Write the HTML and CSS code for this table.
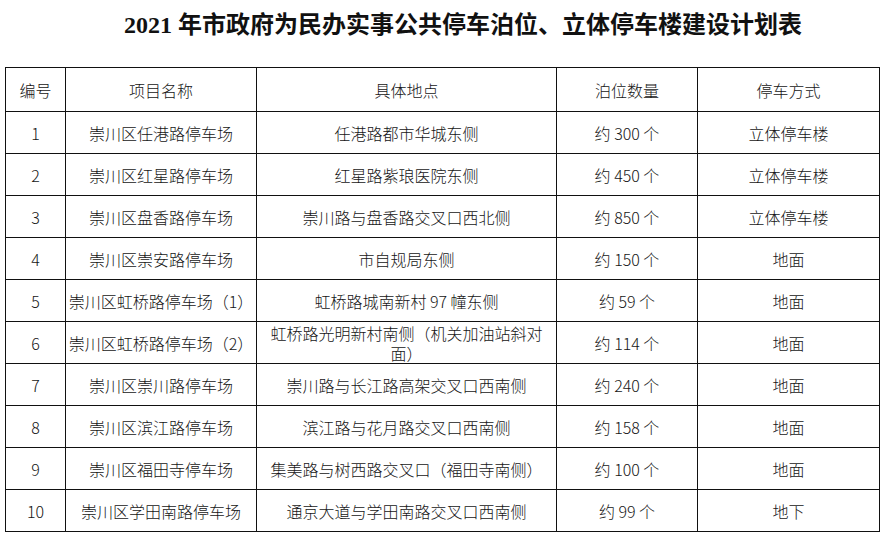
FILE: index.html
```html
<!DOCTYPE html>
<html lang="zh-CN">
<head>
<meta charset="utf-8">
<title>2021年市政府为民办实事公共停车泊位、立体停车楼建设计划表</title>
<link rel="stylesheet" href="styles.css">
</head>
<body>
<div class="page">
  <h1 class="title"><span class="num">2021</span> 年市政府为民办实事公共停车泊位、立体停车楼建设计划表</h1>
  <table class="plan">
    <colgroup>
      <col class="c-no">
      <col class="c-name">
      <col class="c-addr">
      <col class="c-qty">
      <col class="c-type">
    </colgroup>
    <thead>
      <tr class="head"><th>编号</th><th class="name">项目名称</th><th>具体地点</th><th>泊位数量</th><th>停车方式</th></tr>
    </thead>
    <tbody>
      <tr><td>1</td><td class="name">崇川区任港路停车场</td><td>任港路都市华城东侧</td><td>约 300 个</td><td>立体停车楼</td></tr>
      <tr><td>2</td><td class="name">崇川区红星路停车场</td><td>红星路紫琅医院东侧</td><td>约 450 个</td><td>立体停车楼</td></tr>
      <tr><td>3</td><td class="name">崇川区盘香路停车场</td><td>崇川路与盘香路交叉口西北侧</td><td>约 850 个</td><td>立体停车楼</td></tr>
      <tr><td>4</td><td class="name">崇川区崇安路停车场</td><td>市自规局东侧</td><td>约 150 个</td><td>地面</td></tr>
      <tr><td>5</td><td class="name">崇川区虹桥路停车场（1）</td><td>虹桥路城南新村 97 幢东侧</td><td>约 59 个</td><td>地面</td></tr>
      <tr><td>6</td><td class="name">崇川区虹桥路停车场（2）</td><td class="wrap">虹桥路光明新村南侧（机关加油站斜对面）</td><td>约 114 个</td><td>地面</td></tr>
      <tr><td>7</td><td class="name">崇川区崇川路停车场</td><td>崇川路与长江路高架交叉口西南侧</td><td>约 240 个</td><td>地面</td></tr>
      <tr><td>8</td><td class="name">崇川区滨江路停车场</td><td>滨江路与花月路交叉口西南侧</td><td>约 158 个</td><td>地面</td></tr>
      <tr><td>9</td><td class="name">崇川区福田寺停车场</td><td>集美路与树西路交叉口（福田寺南侧）</td><td>约 100 个</td><td>地面</td></tr>
      <tr><td>10</td><td class="name">崇川区学田南路停车场</td><td>通京大道与学田南路交叉口西南侧</td><td>约 99 个</td><td>地下</td></tr>
    </tbody>
  </table>
</div>
</body>
</html>
```

FILE: styles.css
```css
html, body {
  margin: 0;
  padding: 0;
  background: #ffffff;
}

.page {
  width: 884px;
  padding-top: 10px;
}

.title {
  margin: 0 0 26px 42px;
  width: 842px;
  text-align: center;
  font-family: "Liberation Serif", "Noto Sans CJK SC", serif;
  font-size: 24px;
  line-height: 31px;
  font-weight: bold;
  color: #111111;
}

.title .num {
  font-family: "Liberation Serif", serif;
}

.plan {
  margin-left: 5px;
  width: 874px;
  border-collapse: collapse;
  table-layout: fixed;
  font-family: "Noto Sans CJK SC", "Noto Sans", sans-serif;
  font-size: 16px;
  font-weight: 300;
  color: #151515;
}

.c-no { width: 60px; }
.c-name { width: 191px; }
.c-addr { width: 300px; }
.c-qty { width: 141px; }
.c-type { width: 182px; }

.plan th,
.plan td {
  border: 1px solid #111111;
  padding: 0 8px;
  text-align: center;
  vertical-align: middle;
  font-weight: 300;
  line-height: 20px;
  white-space: normal;
}

.plan .name {
  padding: 0 2px;
  white-space: nowrap;
}

.plan .head th {
  height: 43px;
}

.plan tbody td {
  height: 41px;
}

.plan td.wrap {
  line-height: 20px;
}
```
